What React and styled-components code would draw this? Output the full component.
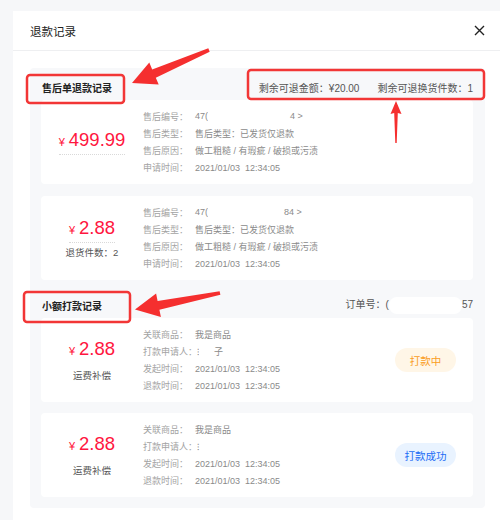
import React from "react";
import styled, { createGlobalStyle } from "styled-components";

const GlobalStyle = createGlobalStyle`
  html, body {
    margin: 0;
    padding: 0;
    background: #f6f7f9;
    overflow: hidden;
  }
  body {
    font-family: "Liberation Sans", "Noto Sans CJK SC", sans-serif;
  }
`;

const Page = styled.div`
  position: relative;
  width: 500px;
  height: 520px;
  overflow: hidden;
`;

const Modal = styled.div`
  margin: 11px 0 0 13px;
  width: 487px;
  height: 520px;
  background: #fff;
`;

const ModalHeader = styled.div`
  height: 40px;
  box-sizing: border-box;
  display: flex;
  align-items: center;
  justify-content: space-between;
  padding: 0 15px 0 17px;
  border-bottom: 1px solid #eeeff1;
`;

const ModalTitle = styled.div`
  font-size: 11.5px;
  color: #222;
`;

const CloseButton = styled.div`
  width: 11px;
  height: 11px;
  display: flex;
  svg {
    display: block;
  }
`;

const ModalBody = styled.div`
  padding: 17px 15px 0 17px;
`;

const Panel = styled.div`
  background: #f7f8fa;
  border-radius: 4px;
  padding: 0 12px 11px 11px;
`;

const SectionHeader = styled.div`
  display: flex;
  align-items: center;
  justify-content: space-between;
  height: ${(p) => p.$height}px;
  padding-top: ${(p) => p.$top}px;
  box-sizing: border-box;
`;

const SectionTitle = styled.div`
  font-size: 10px;
  font-weight: bold;
  color: #222;
  padding-left: 1px;
`;

const SectionMeta = styled.div`
  display: flex;
  align-items: center;
  gap: 18px;
  font-size: 10px;
  color: #555;
`;

/* white block laid over masked parts of ids and names */
const Redacted = styled.span`
  display: inline-block;
  vertical-align: middle;
  width: ${(p) => p.$w}px;
  height: ${(p) => p.$h || 12}px;
  background: #fff;
  border-radius: ${(p) => p.$radius || 0}px;
`;

const CardList = styled.div`
  display: flex;
  flex-direction: column;
  gap: ${(p) => p.$gap}px;
`;

const Card = styled.div`
  display: flex;
  align-items: center;
  background: #fff;
  border-radius: 4px;
  padding: 8px 0;
`;

const AmountCol = styled.div`
  width: 102px;
  flex-shrink: 0;
  display: flex;
  flex-direction: column;
  align-items: center;
`;

const Amount = styled.div`
  color: #ff1640;
  font-size: 18.5px;
  line-height: 20px;
  padding-bottom: ${(p) => (p.$dotted ? 2 : 0)}px;
  border-bottom: ${(p) => (p.$dotted ? "1px dotted #d9d9d9" : "none")};
  white-space: nowrap;

  span {
    font-size: 11px;
    margin-right: 4px;
  }
`;

const AmountNote = styled.div`
  margin-top: ${(p) => p.$gap}px;
  font-size: 9.5px;
  color: #555;
`;

const Info = styled.div`
  flex: 1;
  display: flex;
  flex-direction: column;
`;

const Row = styled.div`
  display: flex;
  height: 17px;
  align-items: center;
  font-size: 9px;
  white-space: nowrap;
`;

const Label = styled.span`
  min-width: 52px;
  color: #a3a3a3;
`;

const Value = styled.span`
  color: #8a8a8a;
`;

const StatusBadge = styled.div`
  width: 61px;
  height: 24px;
  border-radius: 12px;
  margin-right: 17px;
  display: flex;
  align-items: center;
  justify-content: center;
  font-size: 10.5px;
  color: ${(p) => (p.$done ? "#1c6cf5" : "#fa9d1e")};
  background: ${(p) => (p.$done ? "#e9f3ff" : "#fff6e7")};
`;

const Markup = styled.svg`
  position: absolute;
  left: 0;
  top: 0;
  pointer-events: none;
`;

const afterSaleRecords = [
  {
    amount: "499.99",
    note: null,
    id: (
      <>
        47(
        <Redacted $w={82} />4 &gt;
      </>
    ),
  },
  {
    amount: "2.88",
    note: "退货件数：2",
    id: (
      <>
        47(
        <Redacted $w={76} />84 &gt;
      </>
    ),
  },
];

const transferRecords = [
  {
    done: false,
    applicant: (
      <>
        ⁝<Redacted $w={15} />子
      </>
    ),
  },
  {
    done: true,
    applicant: <>⁝</>,
  },
];

const CloseIcon = () => (
  <CloseButton>
    <svg width="11" height="11" viewBox="0 0 11 11">
      <path d="M1 1L10 10M10 1L1 10" stroke="#222" strokeWidth="1.4" />
    </svg>
  </CloseButton>
);

const Annotations = () => (
  <Markup width="500" height="520" viewBox="0 0 500 520">
    <g fill="none" stroke="#f23636" strokeWidth="2.5">
      <rect x="27" y="75" width="97" height="28" rx="3" />
      <rect x="248" y="70" width="236" height="29" rx="3" />
      <rect x="24" y="292" width="106" height="30" rx="3" />
    </g>
    <g fill="#f52f2f">
      <polygon points="208.3,48.3 152.2,69.5 149.3,62.6 132,83 158.7,84.6 155.8,77.7 209.7,51.7" />
      <polygon points="219.6,291.2 157.6,300.9 156.1,293.5 135,309.5 160.9,317.1 159.4,309.7 220.4,294.8" />
      <polygon points="396,101 390.5,114 394.2,113 395.3,143 396.7,143 397.8,113 401.5,114" />
    </g>
  </Markup>
);

export default function App() {
  return (
    <Page>
      <GlobalStyle />
      <Modal>
        <ModalHeader>
          <ModalTitle>退款记录</ModalTitle>
          <CloseIcon />
        </ModalHeader>
        <ModalBody>
          <Panel>
            <SectionHeader $height={32} $top={6}>
              <SectionTitle>售后单退款记录</SectionTitle>
              <SectionMeta>
                <span>剩余可退金额：¥20.00</span>
                <span>剩余可退换货件数：1</span>
              </SectionMeta>
            </SectionHeader>
            <CardList $gap={12}>
              {afterSaleRecords.map((r, i) => (
                <Card key={`as-${i}`}>
                  <AmountCol>
                    <Amount $dotted>
                      <span>¥</span>
                      {r.amount}
                    </Amount>
                    {r.note && <AmountNote $gap={2}>{r.note}</AmountNote>}
                  </AmountCol>
                  <Info>
                    <Row>
                      <Label>售后编号：</Label>
                      <Value>{r.id}</Value>
                    </Row>
                    <Row>
                      <Label>售后类型：</Label>
                      <Value>售后类型：已发货仅退款</Value>
                    </Row>
                    <Row>
                      <Label>售后原因：</Label>
                      <Value>做工粗糙 / 有瑕疵 / 破损或污渍</Value>
                    </Row>
                    <Row>
                      <Label>申请时间：</Label>
                      <Value>2021/01/03&nbsp;&nbsp;12:34:05</Value>
                    </Row>
                  </Info>
                </Card>
              ))}
            </CardList>

            <SectionHeader $height={38} $top={12}>
              <SectionTitle>小额打款记录</SectionTitle>
              <SectionMeta>
                <span>
                  订单号：(
                  <Redacted $w={73} $h={17} $radius={8} />
                  57
                </span>
              </SectionMeta>
            </SectionHeader>
            <CardList $gap={11}>
              {transferRecords.map((r, i) => (
                <Card key={`tr-${i}`}>
                  <AmountCol>
                    <Amount>
                      <span>¥</span>2.88
                    </Amount>
                    <AmountNote $gap={7}>运费补偿</AmountNote>
                  </AmountCol>
                  <Info>
                    <Row>
                      <Label>关联商品：</Label>
                      <Value>我是商品</Value>
                    </Row>
                    <Row>
                      <Label>打款申请人：</Label>
                      <Value>{r.applicant}</Value>
                    </Row>
                    <Row>
                      <Label>发起时间：</Label>
                      <Value>2021/01/03&nbsp;&nbsp;12:34:05</Value>
                    </Row>
                    <Row>
                      <Label>退款时间：</Label>
                      <Value>2021/01/03&nbsp;&nbsp;12:34:05</Value>
                    </Row>
                  </Info>
                  <StatusBadge $done={r.done}>{r.done ? "打款成功" : "打款中"}</StatusBadge>
                </Card>
              ))}
            </CardList>
          </Panel>
        </ModalBody>
      </Modal>
      <Annotations />
    </Page>
  );
}
